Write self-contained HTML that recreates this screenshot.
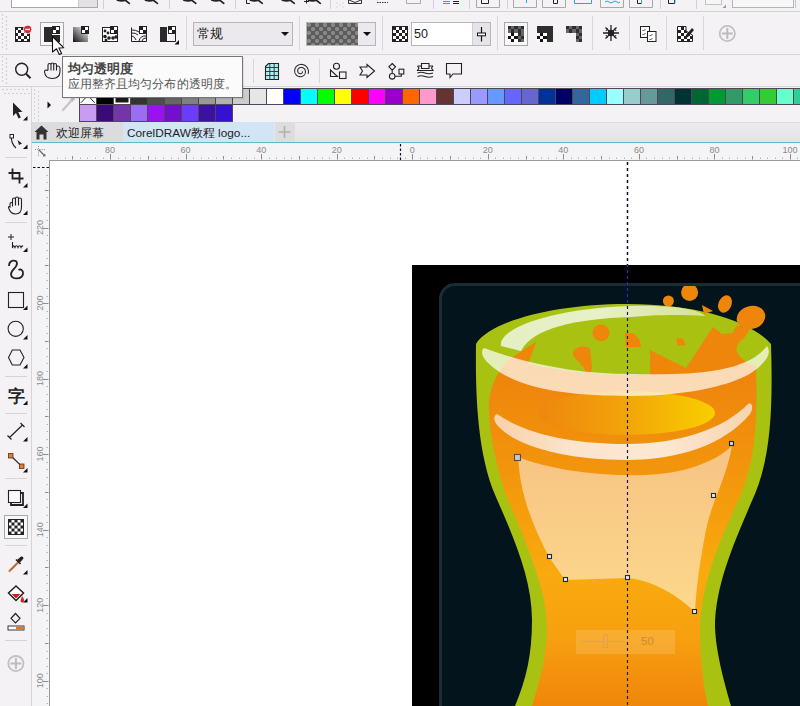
<!DOCTYPE html>
<html><head><meta charset="utf-8">
<style>
*{margin:0;padding:0;box-sizing:border-box}
html,body{width:800px;height:706px;overflow:hidden;background:#f5f2f6;font-family:"Liberation Sans",sans-serif;position:relative}
.a{position:absolute}
.hl{position:absolute;height:1px;background:#d6d4d8}
.vl{position:absolute;width:1px;background:#d6d4d8}
.grip{position:absolute;background-image:radial-gradient(circle at 2.5px 1px,#bcbac0 0.7px,transparent 1.1px),radial-gradient(circle at 6.5px 3px,#bcbac0 0.7px,transparent 1.1px);background-size:8px 4px}
svg{position:absolute;overflow:visible}
.sw{position:absolute;height:17px;border:1px solid #4e4856}
</style></head><body>

<!-- ===== top row (cut off) ===== -->
<div class="a" style="left:11px;top:-2px;width:87px;height:10px;background:#fff;border:1px solid #a9a7ab"></div>
<div class="a" style="left:78px;top:-1px;width:19px;height:8px;background:#e3e1e5;border-left:1px solid #c9c7cb"></div>
<div class="hl" style="left:0;top:11px;width:800px;background:#d3d1d5"></div>

<!-- ===== property bar row ===== -->
<div class="hl" style="left:0;top:54px;width:800px;background:#d6d4d8"></div>

<!-- ===== toolbar row 3 ===== -->
<div class="hl" style="left:0;top:86px;width:800px;background:#d6d4d8"></div>


<!-- ===== toolbar icons ===== -->
<svg class="a" style="left:0;top:0" width="800" height="90" viewBox="0 0 800 90">
<defs>
<pattern id="chk3" x="0" y="0" width="6" height="6" patternUnits="userSpaceOnUse"><rect width="6" height="6" fill="#fff"/><rect width="3" height="3" fill="#222"/><rect x="3" y="3" width="3" height="3" fill="#222"/></pattern>
<pattern id="chkd" x="1" y="1" width="6" height="6" patternUnits="userSpaceOnUse"><rect width="6" height="6" fill="#626262"/><rect width="3" height="3" fill="#262626"/><rect x="3" y="3" width="3" height="3" fill="#262626"/></pattern>
<pattern id="pat" x="307" y="23" width="8" height="8" patternUnits="userSpaceOnUse"><rect width="8" height="8" fill="#5c5c5c"/><circle cx="2" cy="2" r="2.1" fill="#8a8a8a"/><circle cx="6" cy="6" r="2.1" fill="#8a8a8a"/></pattern>
<linearGradient id="gr3" x1="0" y1="1" x2="1" y2="0"><stop offset="0" stop-color="#111"/><stop offset="1" stop-color="#fff"/></linearGradient>
</defs>

<!-- top cut row -->
<g stroke="#d3d1d5" stroke-width="1">
<line x1="103.5" y1="0" x2="103.5" y2="9"/><line x1="169.5" y1="0" x2="169.5" y2="9"/><line x1="235.5" y1="0" x2="235.5" y2="9"/><line x1="330.5" y1="0" x2="330.5" y2="9"/><line x1="433.5" y1="0" x2="433.5" y2="9"/><line x1="469.5" y1="0" x2="469.5" y2="9"/><line x1="507.5" y1="0" x2="507.5" y2="9"/><line x1="660.5" y1="0" x2="660.5" y2="9"/><line x1="696.5" y1="0" x2="696.5" y2="9"/>
</g>
<path d="M117.5,0.3 Q121.5,1.6 125.5,0.3 M125.0,0 L129.3,3.3 M145.6,0.3 Q149.6,1.6 153.6,0.3 M153.1,0 L157.4,3.3 M184,0.3 Q188,1.6 192,0.3 M191.5,0 L195.8,3.3 M212,0.3 Q216,1.6 220,0.3 M219.5,0 L223.8,3.3 M250.5,0.3 Q254.5,1.6 258.5,0.3 M258.0,0 L262.3,3.3 M282.5,0.3 Q286.5,1.6 290.5,0.3 M290.0,0 L294.3,3.3 M308.5,0.3 Q312.5,1.6 316.5,0.3 M316.0,0 L320.3,3.3 " stroke="#222" stroke-width="1.7" fill="none" stroke-linecap="round"/>
<path d="M246.5,0 L246.5,3.5 L250,3.5 M304,1.5 L309,1.5 M306.5,0 L306.5,3.5" stroke="#222" stroke-width="1" fill="none"/>
<g fill="#bbb"><circle cx="337" cy="3" r="0.6"/><circle cx="340" cy="5" r="0.6"/><circle cx="343" cy="3" r="0.6"/><circle cx="337" cy="7" r="0.6"/><circle cx="343" cy="7" r="0.6"/></g>
<path d="M348.5,0 L348.5,3.5 L361.5,3.5 L361.5,0 M349,0 L355,2.5 L361,0" stroke="#333" stroke-width="1" fill="none"/>
<path d="M377,2.5 L388,2.5" stroke="#333" stroke-width="1.2" stroke-dasharray="1.5,1"/>
<path d="M406.5,0 L406.5,3.5 L420.5,3.5 L420.5,0" stroke="#aaa" stroke-width="1" fill="none"/>
<path d="M443,1.5 L450,1.5 M443,3.5 L450,3.5" stroke="#2aa8c0" stroke-width="1.2"/>
<path d="M453,1.5 L459,1.5 M453,3.5 L459,3.5" stroke="#222" stroke-width="1.2"/>
<g stroke="#a8a8a8" stroke-width="1" fill="none">
<path d="M476.5,0 L476.5,7.5 L499.5,7.5 L499.5,0 M513.5,0 L513.5,7.5 L536.5,7.5 L536.5,0 M542.5,0 L542.5,7.5 L565.5,7.5 L565.5,0 M600.5,0 L600.5,7.5 L623.5,7.5 L623.5,0 M629.5,0 L629.5,7.5 L652.5,7.5 L652.5,0"/>
</g>
<path d="M481.5,0 L481.5,3.5 L488.5,3.5 L488.5,0 M553.5,0 L553.5,3.5 L557.5,3.5 L557.5,0 M668.5,0 L668.5,3.5 L674.5,3.5 L674.5,0 M637.5,0 L637.5,3.5 L641.5,3.5" stroke="#222" stroke-width="1" fill="none"/>
<path d="M526.5,0 L526.5,3" stroke="#2aa8c0" stroke-width="1"/>
<path d="M574.5,0 L574.5,3.5 L591.5,3.5 L591.5,0 M605,2 Q607,0 609,2 Q611,4 613,2 Q615,0 617,2 Q619,4 620,2 M641.5,0 L641.5,3 M675,0 L675,3" stroke="#2aa8c0" stroke-width="1" fill="none" stroke-dasharray="none"/>
<rect x="705.5" y="-1" width="16" height="5.5" fill="#f6f6f7" stroke="#c2c2c2"/>
<path d="M726,4.5 L726,8 L722.5,8 Z" fill="#999"/>
<rect x="732.5" y="-1" width="61" height="8.5" fill="#f7f7f8" stroke="#b5b3b7"/><line x1="795.5" y1="0" x2="795.5" y2="8" stroke="#c8c6ca"/>
<!-- property bar -->
<g stroke="#d8d6da" stroke-width="1">
<line x1="186.5" y1="16" x2="186.5" y2="50"/><line x1="299.5" y1="16" x2="299.5" y2="50"/><line x1="382.5" y1="16" x2="382.5" y2="50"/><line x1="497.5" y1="16" x2="497.5" y2="50"/><line x1="592.5" y1="16" x2="592.5" y2="50"/><line x1="629.5" y1="16" x2="629.5" y2="50"/><line x1="666.5" y1="16" x2="666.5" y2="50"/><line x1="703.5" y1="16" x2="703.5" y2="50"/>
</g>
<!-- icon1 -->
<rect x="15.5" y="27.5" width="14" height="14" fill="url(#chk3)" stroke="#222"/>
<circle cx="27.6" cy="29.4" r="4.2" fill="#e0202a" stroke="#fff" stroke-width="0.8"/>
<rect x="25.2" y="28.7" width="4.8" height="1.5" fill="#fff"/>
<!-- icon2 selected -->
<rect x="40.5" y="22.5" width="23" height="23" fill="#f7f6f8" stroke="#a9a7ab"/>
<rect x="44" y="27" width="8" height="15" fill="#2a2a2a"/>
<rect x="52" y="35" width="8" height="7" fill="#2a2a2a"/>
<rect x="52" y="26" width="8" height="8" fill="#222"/><rect x="56" y="27" width="3" height="3" fill="#fff"/><rect x="53" y="30" width="3" height="3" fill="#fff"/>
<!-- icon3 gradient -->
<path d="M73,27 L81,27 L81,34 L88,34 L88,42 L73,42 Z" fill="url(#gr3)"/>
<rect x="81" y="26" width="8" height="8" fill="#222"/><rect x="85" y="27" width="3" height="3" fill="#fff"/><rect x="82" y="30" width="3" height="3" fill="#fff"/>
<!-- icon4 -->
<rect x="102.5" y="27.5" width="15" height="14" fill="#fff" stroke="#222"/>
<g fill="#222"><circle cx="105" cy="31" r="1.4"/><circle cx="108" cy="33" r="1.4"/><circle cx="105" cy="36.5" r="1.8"/><circle cx="109" cy="38" r="1.8"/><circle cx="113" cy="38" r="1.8"/><circle cx="116" cy="37" r="1.8"/><circle cx="106" cy="40" r="1.5"/></g>
<rect x="110" y="26" width="8" height="8" fill="#222"/><rect x="114" y="27" width="3" height="3" fill="#fff"/><rect x="111" y="30" width="3" height="3" fill="#fff"/>
<!-- icon5 arcs -->
<path d="M131.5,27.5 L131.5,41.5 L146.5,41.5 L146.5,34" fill="none" stroke="#222"/>
<g fill="none" stroke="#222" stroke-width="1"><path d="M132,30 A11,11 0 0 1 139,32"/><path d="M132,33 A8,8 0 0 1 138,35"/><path d="M132,36 A6,6 0 0 1 136,40"/><path d="M139,41 A6,6 0 0 1 146,36"/><path d="M142,41 A4,4 0 0 1 146,38"/></g>
<rect x="139" y="26" width="8" height="8" fill="#222"/><rect x="143" y="27" width="3" height="3" fill="#fff"/><rect x="140" y="30" width="3" height="3" fill="#fff"/>
<!-- icon6 -->
<rect x="160" y="27" width="7" height="15" fill="#2a2a2a"/>
<path d="M167,41.5 L175.5,41.5 L175.5,34" fill="none" stroke="#222"/>
<rect x="168" y="26" width="8" height="8" fill="#222"/><rect x="172" y="27" width="3" height="3" fill="#fff"/><rect x="169" y="30" width="3" height="3" fill="#fff"/>
<path d="M179,40 L179,44.5 L174.5,44.5 Z" fill="#111"/>
<!-- dropdown 1 -->
<rect x="193.5" y="22.5" width="99" height="23" fill="#ebe9ed" stroke="#b7b5b9"/>
<path d="M281,32 L289,32 L285,36 Z" fill="#111"/>
<!-- dropdown 2 -->
<rect x="306.5" y="22.5" width="69" height="23" fill="#ebe9ed" stroke="#b7b5b9"/>
<rect x="307" y="23" width="51" height="22" fill="url(#pat)"/>
<path d="M363,32 L371,32 L367,36 Z" fill="#111"/>
<!-- checker icon -->
<rect x="392.5" y="26.5" width="15" height="15" fill="url(#chk3)" stroke="#222"/>
<!-- input -->
<rect x="411.5" y="22.5" width="79" height="23" fill="#fff" stroke="#b7b5b9"/>
<rect x="472" y="23" width="18" height="22" fill="#e6e4e8"/>
<line x1="472.5" y1="23" x2="472.5" y2="45" stroke="#cfcdd1"/>
<line x1="481.5" y1="27" x2="481.5" y2="41.5" stroke="#111" stroke-width="1.2"/>
<rect x="477.5" y="33" width="8" height="2.8" fill="#fff" stroke="#111" stroke-width="1"/>
<!-- selected button 2 -->
<rect x="504.5" y="22.5" width="23" height="23" fill="#f7f6f8" stroke="#a9a7ab"/>
<g shape-rendering="crispEdges"><rect x="508.2" y="26.3" width="15.60" height="15.60" fill="#2e2e2e"/><rect x="511.32" y="26.30" width="3.12" height="3.12" fill="#666"/><rect x="517.56" y="26.30" width="3.12" height="3.12" fill="#666"/><rect x="508.20" y="29.42" width="3.12" height="3.12" fill="#666"/><rect x="514.44" y="29.42" width="3.12" height="3.12" fill="#666"/><rect x="520.68" y="29.42" width="3.12" height="3.12" fill="#666"/><rect x="508.20" y="32.54" width="3.12" height="3.12" fill="#fff"/><rect x="511.32" y="32.54" width="3.12" height="3.12" fill="#111"/><rect x="514.44" y="32.54" width="3.12" height="3.12" fill="#fff"/><rect x="520.68" y="32.54" width="3.12" height="3.12" fill="#666"/><rect x="508.20" y="35.66" width="3.12" height="3.12" fill="#111"/><rect x="511.32" y="35.66" width="3.12" height="3.12" fill="#fff"/><rect x="514.44" y="35.66" width="3.12" height="3.12" fill="#111"/><rect x="517.56" y="35.66" width="3.12" height="3.12" fill="#666"/><rect x="508.20" y="38.78" width="3.12" height="3.12" fill="#fff"/><rect x="511.32" y="38.78" width="3.12" height="3.12" fill="#111"/><rect x="514.44" y="38.78" width="3.12" height="3.12" fill="#fff"/><rect x="520.68" y="38.78" width="3.12" height="3.12" fill="#666"/>
<!-- icon B -->
<rect x="537.2" y="26.3" width="15.60" height="15.60" fill="#2e2e2e"/><rect x="537.20" y="32.54" width="3.12" height="3.12" fill="#fff"/><rect x="540.32" y="32.54" width="3.12" height="3.12" fill="#111"/><rect x="543.44" y="32.54" width="3.12" height="3.12" fill="#fff"/><rect x="537.20" y="35.66" width="3.12" height="3.12" fill="#111"/><rect x="540.32" y="35.66" width="3.12" height="3.12" fill="#fff"/><rect x="543.44" y="35.66" width="3.12" height="3.12" fill="#111"/><rect x="537.20" y="38.78" width="3.12" height="3.12" fill="#fff"/><rect x="540.32" y="38.78" width="3.12" height="3.12" fill="#111"/><rect x="543.44" y="38.78" width="3.12" height="3.12" fill="#fff"/>
<!-- icon C -->
<path d="M566.2,26.3 h15.60 v15.60 h-6.24 v-9.36 h-9.36 Z" fill="#2e2e2e"/><rect x="569.32" y="26.30" width="3.12" height="3.12" fill="#666"/><rect x="575.56" y="26.30" width="3.12" height="3.12" fill="#666"/><rect x="566.20" y="29.42" width="3.12" height="3.12" fill="#666"/><rect x="572.44" y="29.42" width="3.12" height="3.12" fill="#666"/><rect x="578.68" y="29.42" width="3.12" height="3.12" fill="#666"/><rect x="575.56" y="32.54" width="3.12" height="3.12" fill="#666"/><rect x="578.68" y="35.66" width="3.12" height="3.12" fill="#666"/><rect x="575.56" y="38.78" width="3.12" height="3.12" fill="#666"/></g>
<!-- star -->
<g stroke="#222" stroke-width="1.3" fill="none"><path d="M611,25 L611,41 M603,33 L619,33 M605.5,27.5 L616.5,38.5 M616.5,27.5 L605.5,38.5"/></g>
<circle cx="611" cy="33" r="3.2" fill="#222"/>
<g stroke="#222" stroke-width="1" fill="none"><path d="M608,28.5 A4.5,4.5 0 0 0 606,31 M614,28.5 A4.5,4.5 0 0 1 616,31 M608,37.5 A4.5,4.5 0 0 1 606,35 M614,37.5 A4.5,4.5 0 0 0 616,35"/></g>
<!-- pages -->
<rect x="640.5" y="26.5" width="9" height="11" fill="#fff" stroke="#222"/>
<rect x="647.5" y="31.5" width="8.5" height="10" fill="#fff" stroke="#222"/>
<g stroke="#333" stroke-width="0.9" fill="none"><path d="M642.5,30 l1,1 l2,-2 M642.5,34 l1,1 l2,-2 M649.5,35 l1,1 l2,-2 M649.5,39 l1,1 l2,-2"/></g>
<!-- checker pencil -->
<path d="M677.5,26.5 L686,26.5 L686,31 L692.5,35 L692.5,41.5 L677.5,41.5 Z" fill="url(#chk3)" stroke="#222"/>
<path d="M686,35 L692,28 L694,30 L688,37 L685.5,37.5 Z" fill="#222"/>
<!-- plus -->
<circle cx="727.3" cy="33.5" r="7.6" fill="none" stroke="#c2c0c4" stroke-width="1.8"/>
<path d="M727.3,28 L727.3,39 M721.8,33.5 L732.8,33.5" stroke="#bdbbbf" stroke-width="2"/>

<!-- row 3 -->
<circle cx="21.7" cy="69.3" r="6" fill="none" stroke="#222" stroke-width="1.4"/>
<path d="M26,73.8 L30.5,78.3" stroke="#222" stroke-width="2"/>
<path d="M48,70.5 L48,65 Q48,63.5 49.5,63.5 Q51,63.5 51,65 L51,64.5 Q51,63 52.3,63 Q53.7,63 53.7,64.5 L53.7,65 Q53.7,63.5 55.1,63.5 Q56.5,63.5 56.5,65 L56.5,67.5 Q56.5,66 58,66 Q59.8,66 59.9,68 L60,71 Q60,78.5 52.3,78.5 Q45,78.5 44.5,71.8 Q44.5,70 46,70 L48,70.5 M51,65 L51,70.5 M53.7,65 L53.7,70.5 M56.5,66 L56.5,70.5" fill="none" stroke="#222" stroke-width="1.1"/>
<line x1="253.5" y1="59" x2="253.5" y2="83" stroke="#d8d6da"/>
<line x1="319.5" y1="59" x2="319.5" y2="83" stroke="#d8d6da"/>
<!-- grid icon -->
<path d="M265.5,66.5 L268.5,63.5 L278.5,63.5 L278.5,79.5 L265.5,79.5 Z" fill="#a8f0f2" stroke="#222" stroke-width="1.1"/>
<g stroke="#2a2a2a" stroke-width="0.9"><path d="M269.8,63.5 L269.8,79.5 M274.2,63.5 L274.2,79.5 M265.5,67.5 L278.5,67.5 M265.5,71.5 L278.5,71.5 M265.5,75.5 L278.5,75.5"/></g>
<!-- spiral -->
<path d="M302.40,71.36 L302.42,71.46 L302.44,71.57 L302.45,71.68 L302.45,71.80 L302.44,71.91 L302.43,72.03 L302.41,72.15 L302.38,72.27 L302.34,72.38 L302.29,72.50 L302.23,72.61 L302.16,72.73 L302.09,72.83 L302.01,72.94 L301.91,73.04 L301.81,73.13 L301.71,73.22 L301.59,73.31 L301.47,73.38 L301.34,73.45 L301.21,73.51 L301.07,73.57 L300.93,73.61 L300.78,73.64 L300.62,73.67 L300.47,73.68 L300.31,73.69 L300.15,73.68 L299.99,73.66 L299.82,73.63 L299.66,73.59 L299.50,73.54 L299.34,73.48 L299.19,73.41 L299.03,73.32 L298.88,73.23 L298.74,73.12 L298.60,73.00 L298.47,72.87 L298.35,72.74 L298.24,72.59 L298.13,72.43 L298.03,72.27 L297.95,72.10 L297.87,71.92 L297.81,71.73 L297.75,71.54 L297.71,71.35 L297.68,71.15 L297.67,70.94 L297.67,70.74 L297.68,70.53 L297.71,70.32 L297.75,70.11 L297.80,69.91 L297.87,69.70 L297.95,69.50 L298.05,69.30 L298.16,69.11 L298.29,68.92 L298.42,68.74 L298.57,68.57 L298.74,68.41 L298.91,68.26 L299.09,68.11 L299.29,67.98 L299.50,67.86 L299.71,67.76 L299.93,67.66 L300.16,67.58 L300.40,67.52 L300.64,67.47 L300.89,67.44 L301.14,67.42 L301.40,67.42 L301.65,67.44 L301.91,67.47 L302.16,67.52 L302.42,67.59 L302.66,67.67 L302.91,67.77 L303.15,67.89 L303.38,68.02 L303.61,68.17 L303.83,68.34 L304.04,68.52 L304.23,68.72 L304.42,68.93 L304.59,69.15 L304.75,69.38 L304.89,69.63 L305.02,69.89 L305.13,70.15 L305.23,70.43 L305.31,70.71 L305.37,71.00 L305.41,71.29 L305.43,71.59 L305.43,71.89 L305.41,72.20 L305.38,72.50 L305.32,72.80 L305.24,73.10 L305.14,73.40 L305.03,73.69 L304.89,73.97 L304.74,74.25 L304.56,74.51 L304.37,74.77 L304.16,75.02 L303.93,75.25 L303.69,75.47 L303.43,75.67 L303.16,75.86 L302.87,76.03 L302.57,76.18 L302.26,76.32 L301.95,76.43 L301.62,76.53 L301.28,76.60 L300.94,76.65 L300.60,76.68 L300.25,76.68 L299.90,76.67 L299.55,76.63 L299.20,76.57 L298.85,76.48 L298.51,76.37 L298.17,76.24 L297.84,76.09 L297.52,75.92 L297.21,75.72 L296.91,75.50 L296.63,75.26 L296.36,75.01 L296.10,74.73 L295.87,74.44 L295.65,74.13 L295.45,73.81 L295.27,73.47 L295.11,73.12 L294.98,72.75 L294.86,72.38 L294.78,72.00 L294.71,71.61 L294.67,71.22 L294.66,70.82 L294.67,70.43 L294.71,70.03 L294.78,69.63 L294.87,69.24 L294.98,68.85 L295.13,68.46 L295.29,68.09 L295.49,67.72 L295.70,67.37 L295.94,67.03 L296.21,66.70 L296.49,66.39 L296.80,66.10 L297.12,65.83 L297.47,65.58 L297.83,65.35 L298.21,65.14 L298.60,64.96 L299.00,64.80 L299.42,64.67 L299.84,64.56 L300.28,64.48 L300.72,64.43 L301.16,64.41 L301.61,64.42 L302.05,64.45 L302.50,64.52 L302.94,64.61 L303.38,64.73 L303.81,64.88 L304.23,65.06 L304.64,65.27 L305.04,65.51 L305.42,65.77 L305.79,66.05 L306.14,66.36 L306.47,66.70 L306.78,67.06 L307.07,67.43 L307.33,67.83 L307.57,68.25 L307.78,68.68 L307.97,69.12 L308.12,69.58 L308.25,70.05 L308.34,70.53 L308.41,71.02 L308.44,71.51 L308.44,72.00 L308.41,72.50 L308.35,72.99 L308.26,73.48 L308.13,73.97" fill="none" stroke="#333" stroke-width="1.1"/>
<!-- shapes -->
<circle cx="336.5" cy="66.3" r="3" fill="none" stroke="#222" stroke-width="1.1"/>
<path d="M330.5,70 L330.5,76.5 L337.5,76.5 Z" fill="none" stroke="#222" stroke-width="1.1"/>
<rect x="339.5" y="72" width="6.5" height="6.5" fill="none" stroke="#222" stroke-width="1.1"/>
<!-- arrow -->
<path d="M360,67 L367,67 L367,64.5 L374.5,71 L367,77.5 L367,75 L360,75 L362.5,71 Z" fill="none" stroke="#222" stroke-width="1.1" stroke-linejoin="miter"/>
<!-- flowchart -->
<path d="M392.2,63.5 L395.5,66.8 L392.2,70.1 L388.9,66.8 Z M392.2,70.1 L392.2,73.2 M395,76.3 L401.3,76.3 L401.3,74" fill="none" stroke="#222" stroke-width="1.1"/>
<circle cx="392.2" cy="76.3" r="2.8" fill="none" stroke="#222" stroke-width="1.1"/>
<rect x="399" y="69.2" width="4.8" height="4.8" fill="none" stroke="#222" stroke-width="1.1"/>
<!-- banner -->
<path d="M421.5,63.5 L429,63.5 L429,68.5 L421.5,68.5 Z M417.5,66 L421.5,66 M429,66 L433,66 M417.5,66 L419,68 L417.5,70.5 L433,70.5 L431.5,68 L433,66 M417.5,73 Q421,71.5 425,73 Q429,74.5 433,73 M417.5,76.5 Q421,75 425,76.5 Q429,78 433,76.5" fill="none" stroke="#222" stroke-width="1.1"/>
<!-- callout -->
<path d="M446.5,63.5 L461.5,63.5 L461.5,74 L453,74 L450,77.5 L450,74 L446.5,74 Z" fill="none" stroke="#222" stroke-width="1.1"/>
</svg>
<div class="a" style="left:197px;top:26px;font-size:13px;font-weight:500;line-height:16px;color:#222;white-space:nowrap">常规</div>
<div class="a" style="left:414px;top:26px;font-size:12.5px;line-height:16px;color:#222;white-space:nowrap">50</div>

<!-- ===== toolbox ===== -->
<div class="vl" style="left:31px;top:87px;height:619px;background:#d6d4d8"></div>


<!-- ===== toolbox icons ===== -->
<svg class="a" style="left:0;top:0" width="32" height="706" viewBox="0 0 32 706">
<defs><pattern id="chk3b" x="8.5" y="519.5" width="6" height="6" patternUnits="userSpaceOnUse"><rect width="6" height="6" fill="#fff"/><rect width="3" height="3" fill="#222"/><rect x="3" y="3" width="3" height="3" fill="#222"/></pattern></defs>
<g fill="#d6d4d8">
<rect x="5" y="157" width="22" height="1"/><rect x="5" y="222" width="22" height="1"/><rect x="5" y="376" width="22" height="1"/><rect x="5" y="413" width="22" height="1"/><rect x="5" y="478" width="22" height="1"/><rect x="5" y="545" width="22" height="1"/><rect x="5" y="640" width="22" height="1"/>
</g>
<!-- arrow -->
<path d="M13,102.5 L13,116 L16,113 L18.6,118.5 L20.8,117.5 L18.3,112 L22.5,112 Z" fill="#222"/>

<path d="M27.5,116 L27.5,120.5 L23.0,120.5 Z" fill="#111"/>
<!-- shape tool -->
<path d="M11.5,135 Q10.5,143 16,148" fill="none" stroke="#222" stroke-width="1.1"/>
<rect x="10" y="134.5" width="3.5" height="3.5" fill="#fff" stroke="#222" stroke-width="1"/>
<path d="M17.5,140 L22,143.5 L19,145 Z" fill="#222"/>
<path d="M27.5,144.5 L27.5,149.0 L23.0,149.0 Z" fill="#111"/>
<!-- crop -->
<path d="M12.5,168.5 L12.5,178.5 L23.5,178.5 M8.5,173 L19.5,173 L19.5,183.5" fill="none" stroke="#222" stroke-width="1.8"/>
<path d="M27.5,183 L27.5,187.5 L23.0,187.5 Z" fill="#111"/>
<!-- hand -->
<path d="M10,207 L10,204 Q10,202.5 11.3,202.5 Q12.5,202.5 12.5,204 L12.5,199.5 Q12.5,198 14,198 Q15.5,198 15.5,199.5 L15.5,198.5 Q15.5,197 17,197 Q18.5,197 18.5,198.5 L18.5,199.5 Q18.5,198 20,198 Q21.5,198 21.5,199.5 L21.5,207 Q21.5,214 15.5,214 Q11,214 9,209 L8.5,207.5 Q8.5,206 10,207 Z M12.5,204 L12.5,206.5 M15.5,199.5 L15.5,205.5 M18.5,199.5 L18.5,205.5" fill="none" stroke="#222" stroke-width="1.1"/>
<path d="M27.5,210.5 L27.5,215.0 L23.0,215.0 Z" fill="#111"/>
<!-- freehand -->
<path d="M11,234 L11,240 M8,237 L14,237" stroke="#222" stroke-width="1"/>
<path d="M12.5,242 L12.5,248 Q13.5,244 15,247.5 Q16.5,244 18,247.5 Q19.5,244 21,247.5 Q22,245 23,246.5" fill="none" stroke="#222" stroke-width="1.1"/>
<path d="M27.5,247.5 L27.5,252.0 L23.0,252.0 Z" fill="#111"/>
<!-- bezier -->
<path d="M9,266 C9,259.5 17,259 17,263.5 C17,268 10.5,270 11,274.5 C11.5,279.5 22,280 23,274 C23.5,270 20.5,268.5 18.5,270" fill="none" stroke="#222" stroke-width="1.8"/>
<!-- rectangle -->
<rect x="8.5" y="292.5" width="15" height="15" fill="none" stroke="#222" stroke-width="1.1"/>
<path d="M27.5,305.5 L27.5,310.0 L23.0,310.0 Z" fill="#111"/>
<circle cx="15.7" cy="328.8" r="7.6" fill="none" stroke="#222" stroke-width="1.1"/>
<path d="M27.5,335 L27.5,339.5 L23.0,339.5 Z" fill="#111"/>
<path d="M12.3,350 L20,350 L24,357.5 L20,365 L12.3,365 L8.5,357.5 Z" fill="none" stroke="#222" stroke-width="1.1"/>
<path d="M27.5,364 L27.5,368.5 L23.0,368.5 Z" fill="#111"/>
<text x="8" y="401.5" font-size="16.5" font-weight="bold" fill="#222">字</text>
<path d="M27.5,400.5 L27.5,405.0 L23.0,405.0 Z" fill="#111"/>
<path d="M9.5,437.5 L22.5,425 M7.5,435.5 L11.5,439.5 M20.5,423 L24.5,427" fill="none" stroke="#222" stroke-width="1.2"/>
<path d="M27.5,437 L27.5,441.5 L23.0,441.5 Z" fill="#111"/>
<path d="M10.5,455.5 L21.7,466.2" stroke="#333" stroke-width="1.2"/>
<rect x="8.5" y="453.5" width="4.5" height="4.5" fill="#e27c2e" stroke="#5a3418" stroke-width="0.8"/>
<rect x="19.5" y="464" width="4.5" height="4.5" fill="#e27c2e" stroke="#5a3418" stroke-width="0.8"/>
<path d="M27.5,468 L27.5,472.5 L23.0,472.5 Z" fill="#111"/>
<rect x="8.5" y="490.5" width="12" height="12" fill="#fbfbfb" stroke="#222" stroke-width="1.1"/>
<path d="M21,493 L23,493 L23,505 L11,505 L11,503" fill="none" stroke="#222" stroke-width="1.8"/>
<path d="M27.5,503.5 L27.5,508.0 L23.0,508.0 Z" fill="#111"/>
<rect x="4.5" y="515.5" width="23" height="23" fill="#f7f6f8" stroke="#a9a7ab"/>
<rect x="8.5" y="519.5" width="15" height="15" fill="url(#chk3b)" stroke="#222"/>
<!-- eyedropper -->
<path d="M9.5,571 L18,562.5" stroke="#d2763a" stroke-width="2.2" stroke-linecap="round"/>
<path d="M10.5,570 L17,563.5" stroke="#7a4018" stroke-width="0.6"/>
<path d="M17,560 L21,556.5 Q23.5,556 23.5,558.5 L20,562.5 Z" fill="#222"/>
<path d="M16,559.5 L20.5,564" stroke="#222" stroke-width="1.6"/>
<path d="M27.5,570 L27.5,574.5 L23.0,574.5 Z" fill="#111"/>
<!-- fill -->
<path d="M16,586 L23.5,593 L16,600.5 L8.5,593 Z" fill="#fff" stroke="#222" stroke-width="1.5"/>
<path d="M11.5,594 L20.5,594 L16,598.5 Z" fill="#d42020"/>
<path d="M22,596 Q25,599.5 23.5,602 Q21.5,603.5 20.5,601 Z" fill="#d42020"/>
<path d="M27.5,598 L27.5,602.5 L23.0,602.5 Z" fill="#111"/>
<!-- smart fill -->
<path d="M15.5,613.5 L20,618.3 L15.5,623 L11,618.3 Z" fill="#f0f0f0" stroke="#222" stroke-width="1.2"/>
<rect x="8" y="626" width="16" height="4" fill="#fff" stroke="#222" stroke-width="0.9"/>
<rect x="16" y="626.5" width="7.5" height="3" fill="#d67a30"/>
<circle cx="15.9" cy="663.6" r="7.6" fill="none" stroke="#c2c0c4" stroke-width="1.8"/>
<path d="M15.9,658 L15.9,669 M10.4,663.6 L21.4,663.6" stroke="#bdbbbf" stroke-width="2"/>
</svg>
<!-- ===== palette ===== -->
<div id="pal">
<div class="sw" style="left:79.10px;top:88px;width:18px;background:#ffffff"></div>
<div class="sw" style="left:96.10px;top:88px;width:18px;background:#000000"></div>
<div class="sw" style="left:113.10px;top:88px;width:18px;background:#1a1a1a;box-shadow:inset 0 0 0 1.5px #fff"></div>
<div class="sw" style="left:130.10px;top:88px;width:18px;background:#333333"></div>
<div class="sw" style="left:147.10px;top:88px;width:18px;background:#4d4d4d"></div>
<div class="sw" style="left:164.10px;top:88px;width:18px;background:#666666"></div>
<div class="sw" style="left:181.10px;top:88px;width:18px;background:#808080"></div>
<div class="sw" style="left:198.10px;top:88px;width:18px;background:#999999"></div>
<div class="sw" style="left:215.10px;top:88px;width:18px;background:#b3b3b3"></div>
<div class="sw" style="left:232.10px;top:88px;width:18px;background:#cccccc"></div>
<div class="sw" style="left:249.10px;top:88px;width:18px;background:#e6e6e6"></div>
<div class="sw" style="left:266.10px;top:88px;width:18px;background:#ffffff"></div>
<div class="sw" style="left:283.10px;top:88px;width:18px;background:#0000ff"></div>
<div class="sw" style="left:300.10px;top:88px;width:18px;background:#00ffff"></div>
<div class="sw" style="left:317.10px;top:88px;width:18px;background:#00ff00"></div>
<div class="sw" style="left:334.10px;top:88px;width:18px;background:#ffff00"></div>
<div class="sw" style="left:351.10px;top:88px;width:18px;background:#ff0000"></div>
<div class="sw" style="left:368.10px;top:88px;width:18px;background:#ff00ff"></div>
<div class="sw" style="left:385.10px;top:88px;width:18px;background:#9900cc"></div>
<div class="sw" style="left:402.10px;top:88px;width:18px;background:#ff6600"></div>
<div class="sw" style="left:419.10px;top:88px;width:18px;background:#ff99cc"></div>
<div class="sw" style="left:436.10px;top:88px;width:18px;background:#663333"></div>
<div class="sw" style="left:453.10px;top:88px;width:18px;background:#ccccff"></div>
<div class="sw" style="left:470.10px;top:88px;width:18px;background:#9999ff"></div>
<div class="sw" style="left:487.10px;top:88px;width:18px;background:#6699ff"></div>
<div class="sw" style="left:504.10px;top:88px;width:18px;background:#6666ff"></div>
<div class="sw" style="left:521.10px;top:88px;width:18px;background:#6666cc"></div>
<div class="sw" style="left:538.10px;top:88px;width:18px;background:#003399"></div>
<div class="sw" style="left:555.10px;top:88px;width:18px;background:#000066"></div>
<div class="sw" style="left:572.10px;top:88px;width:18px;background:#336699"></div>
<div class="sw" style="left:589.10px;top:88px;width:18px;background:#00ccff"></div>
<div class="sw" style="left:606.10px;top:88px;width:18px;background:#99ffff"></div>
<div class="sw" style="left:623.10px;top:88px;width:18px;background:#99cccc"></div>
<div class="sw" style="left:640.10px;top:88px;width:18px;background:#669999"></div>
<div class="sw" style="left:657.10px;top:88px;width:18px;background:#336666"></div>
<div class="sw" style="left:674.10px;top:88px;width:18px;background:#003333"></div>
<div class="sw" style="left:691.10px;top:88px;width:18px;background:#006633"></div>
<div class="sw" style="left:708.10px;top:88px;width:18px;background:#009933"></div>
<div class="sw" style="left:725.10px;top:88px;width:18px;background:#339966"></div>
<div class="sw" style="left:742.10px;top:88px;width:18px;background:#33cc66"></div>
<div class="sw" style="left:759.10px;top:88px;width:18px;background:#33cc33"></div>
<div class="sw" style="left:776.10px;top:88px;width:18px;background:#66ffcc"></div>
<div class="sw" style="left:793.10px;top:88px;width:18px;background:#33cc99"></div>
<div class="sw" style="left:79.10px;top:104px;width:18px;height:18px;background:#c99cf2"></div>
<div class="sw" style="left:96.10px;top:104px;width:18px;height:18px;background:#3c0a78"></div>
<div class="sw" style="left:113.10px;top:104px;width:18px;height:18px;background:#7236a8"></div>
<div class="sw" style="left:130.10px;top:104px;width:18px;height:18px;background:#9a6ef0"></div>
<div class="sw" style="left:147.10px;top:104px;width:18px;height:18px;background:#9a12ee"></div>
<div class="sw" style="left:164.10px;top:104px;width:18px;height:18px;background:#7410cc"></div>
<div class="sw" style="left:181.10px;top:104px;width:18px;height:18px;background:#6a3ef8"></div>
<div class="sw" style="left:198.10px;top:104px;width:18px;height:18px;background:#3c10a0"></div>
<div class="sw" style="left:215.10px;top:104px;width:18px;height:18px;background:#3412d0"></div>
</div>
<!-- palette extras -->
<svg class="a" style="left:0;top:0" width="45" height="125" viewBox="0 0 45 125"><g fill="#c4c2c6"><circle cx="2.5" cy="15" r="0.75"/><circle cx="6.5" cy="17" r="0.75"/><circle cx="2.5" cy="19" r="0.75"/><circle cx="6.5" cy="21" r="0.75"/><circle cx="2.5" cy="23" r="0.75"/><circle cx="6.5" cy="25" r="0.75"/><circle cx="2.5" cy="27" r="0.75"/><circle cx="6.5" cy="29" r="0.75"/><circle cx="2.5" cy="31" r="0.75"/><circle cx="6.5" cy="33" r="0.75"/><circle cx="2.5" cy="35" r="0.75"/><circle cx="6.5" cy="37" r="0.75"/><circle cx="2.5" cy="39" r="0.75"/><circle cx="6.5" cy="41" r="0.75"/><circle cx="2.5" cy="43" r="0.75"/><circle cx="6.5" cy="45" r="0.75"/><circle cx="2.5" cy="47" r="0.75"/><circle cx="6.5" cy="49" r="0.75"/><circle cx="2.5" cy="57" r="0.75"/><circle cx="6.5" cy="59" r="0.75"/><circle cx="2.5" cy="61" r="0.75"/><circle cx="6.5" cy="63" r="0.75"/><circle cx="2.5" cy="65" r="0.75"/><circle cx="6.5" cy="67" r="0.75"/><circle cx="2.5" cy="69" r="0.75"/><circle cx="6.5" cy="71" r="0.75"/><circle cx="2.5" cy="73" r="0.75"/><circle cx="6.5" cy="75" r="0.75"/><circle cx="2.5" cy="77" r="0.75"/><circle cx="6.5" cy="79" r="0.75"/><circle cx="2.5" cy="81" r="0.75"/><circle cx="6.5" cy="83" r="0.75"/><circle cx="3" cy="89.5" r="0.75"/><circle cx="5" cy="93.5" r="0.75"/><circle cx="7" cy="89.5" r="0.75"/><circle cx="9" cy="93.5" r="0.75"/><circle cx="11" cy="89.5" r="0.75"/><circle cx="13" cy="93.5" r="0.75"/><circle cx="15" cy="89.5" r="0.75"/><circle cx="17" cy="93.5" r="0.75"/><circle cx="19" cy="89.5" r="0.75"/><circle cx="21" cy="93.5" r="0.75"/><circle cx="23" cy="89.5" r="0.75"/><circle cx="25" cy="93.5" r="0.75"/><circle cx="27" cy="89.5" r="0.75"/><circle cx="29" cy="93.5" r="0.75"/><circle cx="34.5" cy="90" r="0.75"/><circle cx="38.5" cy="92" r="0.75"/><circle cx="34.5" cy="94" r="0.75"/><circle cx="38.5" cy="96" r="0.75"/><circle cx="34.5" cy="98" r="0.75"/><circle cx="38.5" cy="100" r="0.75"/><circle cx="34.5" cy="102" r="0.75"/><circle cx="38.5" cy="104" r="0.75"/><circle cx="34.5" cy="106" r="0.75"/><circle cx="38.5" cy="108" r="0.75"/><circle cx="34.5" cy="110" r="0.75"/><circle cx="38.5" cy="112" r="0.75"/><circle cx="34.5" cy="114" r="0.75"/><circle cx="38.5" cy="116" r="0.75"/><circle cx="34.5" cy="118" r="0.75"/><circle cx="38.5" cy="120" r="0.75"/></g></svg>

<svg class="a" style="left:0;top:0" width="90" height="125" viewBox="0 0 90 125">
<path d="M47.5,101.5 L51,105 L47.5,108.5 Z" fill="#111"/>
<path d="M63,110 L71,101" stroke="#c8c6ca" stroke-width="2.4" stroke-linecap="round"/>
<path d="M70,99.5 L73,97 L75,99 L72.5,102 Z" fill="#bdbbbf"/>
<path d="M87.8,95.3 L80.9,102.8 M87.8,95.3 L94.7,102.8" stroke="#333" stroke-width="1"/>
</svg>
<!-- ===== tabs ===== -->
<div class="a" style="left:32px;top:122px;width:768px;height:20px;background:linear-gradient(#eceaee,#e5e3e7);border-top:1px solid #dddbdf"></div>
<div class="a" style="left:32px;top:122px;width:91px;height:20px;background:#dcdbdf"></div>
<div class="a" style="left:123px;top:122px;width:151px;height:20px;background:#d2e5f6"></div>
<div class="a" style="left:275px;top:122px;width:20px;height:20px;background:#dddcdf"></div>
<div class="a" style="left:32px;top:142px;width:768px;height:1px;background:#5fb9c9"></div>
<!-- tab content -->
<svg class="a" style="left:0;top:0" width="100" height="150" viewBox="0 0 100 150"><path fill="#333" d="M34.5,132 L41.5,125.5 L48.5,132 L46.5,132 L46.5,139.5 L43.5,139.5 L43.5,134.5 L39.5,134.5 L39.5,139.5 L36.5,139.5 L36.5,132 Z"/></svg>
<div class="a" style="left:55.5px;top:125px;font-size:12px;font-weight:500;line-height:16px;color:#222;white-space:nowrap">欢迎屏幕</div>
<div class="a" style="left:127px;top:125px;font-size:11.8px;line-height:16px;color:#222;white-space:nowrap">CorelDRAW教程 logo...</div>
<svg class="a" style="left:0;top:0" width="300" height="150" viewBox="0 0 300 150"><path stroke="#b0b0b0" stroke-width="1.6" d="M284.5,126 L284.5,138 M278.5,132 L290.5,132"/></svg>


<!-- ===== rulers ===== -->
<div class="a" style="left:32px;top:143px;width:768px;height:17px;background:#f4f3f6"></div>
<div class="a" style="left:32px;top:143px;width:17px;height:563px;background:#f4f3f6"></div>
<div class="a" style="left:49px;top:160px;width:751px;height:546px;background:#fff"></div>
<div class="a" style="left:49px;top:160px;width:751px;height:1px;background:#9a9a9a"></div>
<div class="a" style="left:49px;top:160px;width:1px;height:546px;background:#9a9a9a"></div>

<!-- ===== ruler ticks ===== -->
<svg class="a" style="left:0;top:0" width="800" height="706" viewBox="0 0 800 706">
<g stroke="#8c8c8c" stroke-width="1" fill="none">
<line x1="57.5" y1="157.5" x2="57.5" y2="159" stroke="#b4b4b4"/>
<line x1="65.5" y1="157.5" x2="65.5" y2="159" stroke="#b4b4b4"/>
<line x1="72.5" y1="156" x2="72.5" y2="159.5"/>
<line x1="80.5" y1="157.5" x2="80.5" y2="159" stroke="#b4b4b4"/>
<line x1="87.5" y1="157.5" x2="87.5" y2="159" stroke="#b4b4b4"/>
<line x1="95.5" y1="157.5" x2="95.5" y2="159" stroke="#b4b4b4"/>
<line x1="103.5" y1="157.5" x2="103.5" y2="159" stroke="#b4b4b4"/>
<line x1="110.5" y1="154" x2="110.5" y2="159.5"/>
<line x1="118.5" y1="157.5" x2="118.5" y2="159" stroke="#b4b4b4"/>
<line x1="125.5" y1="157.5" x2="125.5" y2="159" stroke="#b4b4b4"/>
<line x1="133.5" y1="157.5" x2="133.5" y2="159" stroke="#b4b4b4"/>
<line x1="140.5" y1="157.5" x2="140.5" y2="159" stroke="#b4b4b4"/>
<line x1="148.5" y1="156" x2="148.5" y2="159.5"/>
<line x1="155.5" y1="157.5" x2="155.5" y2="159" stroke="#b4b4b4"/>
<line x1="163.5" y1="157.5" x2="163.5" y2="159" stroke="#b4b4b4"/>
<line x1="171.5" y1="157.5" x2="171.5" y2="159" stroke="#b4b4b4"/>
<line x1="178.5" y1="157.5" x2="178.5" y2="159" stroke="#b4b4b4"/>
<line x1="186.5" y1="154" x2="186.5" y2="159.5"/>
<line x1="193.5" y1="157.5" x2="193.5" y2="159" stroke="#b4b4b4"/>
<line x1="201.5" y1="157.5" x2="201.5" y2="159" stroke="#b4b4b4"/>
<line x1="208.5" y1="157.5" x2="208.5" y2="159" stroke="#b4b4b4"/>
<line x1="216.5" y1="157.5" x2="216.5" y2="159" stroke="#b4b4b4"/>
<line x1="223.5" y1="156" x2="223.5" y2="159.5"/>
<line x1="231.5" y1="157.5" x2="231.5" y2="159" stroke="#b4b4b4"/>
<line x1="239.5" y1="157.5" x2="239.5" y2="159" stroke="#b4b4b4"/>
<line x1="246.5" y1="157.5" x2="246.5" y2="159" stroke="#b4b4b4"/>
<line x1="254.5" y1="157.5" x2="254.5" y2="159" stroke="#b4b4b4"/>
<line x1="261.5" y1="154" x2="261.5" y2="159.5"/>
<line x1="269.5" y1="157.5" x2="269.5" y2="159" stroke="#b4b4b4"/>
<line x1="276.5" y1="157.5" x2="276.5" y2="159" stroke="#b4b4b4"/>
<line x1="284.5" y1="157.5" x2="284.5" y2="159" stroke="#b4b4b4"/>
<line x1="291.5" y1="157.5" x2="291.5" y2="159" stroke="#b4b4b4"/>
<line x1="299.5" y1="156" x2="299.5" y2="159.5"/>
<line x1="307.5" y1="157.5" x2="307.5" y2="159" stroke="#b4b4b4"/>
<line x1="314.5" y1="157.5" x2="314.5" y2="159" stroke="#b4b4b4"/>
<line x1="322.5" y1="157.5" x2="322.5" y2="159" stroke="#b4b4b4"/>
<line x1="329.5" y1="157.5" x2="329.5" y2="159" stroke="#b4b4b4"/>
<line x1="337.5" y1="154" x2="337.5" y2="159.5"/>
<line x1="344.5" y1="157.5" x2="344.5" y2="159" stroke="#b4b4b4"/>
<line x1="352.5" y1="157.5" x2="352.5" y2="159" stroke="#b4b4b4"/>
<line x1="359.5" y1="157.5" x2="359.5" y2="159" stroke="#b4b4b4"/>
<line x1="367.5" y1="157.5" x2="367.5" y2="159" stroke="#b4b4b4"/>
<line x1="374.5" y1="156" x2="374.5" y2="159.5"/>
<line x1="382.5" y1="157.5" x2="382.5" y2="159" stroke="#b4b4b4"/>
<line x1="390.5" y1="157.5" x2="390.5" y2="159" stroke="#b4b4b4"/>
<line x1="397.5" y1="157.5" x2="397.5" y2="159" stroke="#b4b4b4"/>
<line x1="405.5" y1="157.5" x2="405.5" y2="159" stroke="#b4b4b4"/>
<line x1="412.5" y1="154" x2="412.5" y2="159.5"/>
<line x1="420.5" y1="157.5" x2="420.5" y2="159" stroke="#b4b4b4"/>
<line x1="427.5" y1="157.5" x2="427.5" y2="159" stroke="#b4b4b4"/>
<line x1="435.5" y1="157.5" x2="435.5" y2="159" stroke="#b4b4b4"/>
<line x1="442.5" y1="157.5" x2="442.5" y2="159" stroke="#b4b4b4"/>
<line x1="450.5" y1="156" x2="450.5" y2="159.5"/>
<line x1="458.5" y1="157.5" x2="458.5" y2="159" stroke="#b4b4b4"/>
<line x1="465.5" y1="157.5" x2="465.5" y2="159" stroke="#b4b4b4"/>
<line x1="473.5" y1="157.5" x2="473.5" y2="159" stroke="#b4b4b4"/>
<line x1="480.5" y1="157.5" x2="480.5" y2="159" stroke="#b4b4b4"/>
<line x1="488.5" y1="154" x2="488.5" y2="159.5"/>
<line x1="495.5" y1="157.5" x2="495.5" y2="159" stroke="#b4b4b4"/>
<line x1="503.5" y1="157.5" x2="503.5" y2="159" stroke="#b4b4b4"/>
<line x1="510.5" y1="157.5" x2="510.5" y2="159" stroke="#b4b4b4"/>
<line x1="518.5" y1="157.5" x2="518.5" y2="159" stroke="#b4b4b4"/>
<line x1="526.5" y1="156" x2="526.5" y2="159.5"/>
<line x1="533.5" y1="157.5" x2="533.5" y2="159" stroke="#b4b4b4"/>
<line x1="541.5" y1="157.5" x2="541.5" y2="159" stroke="#b4b4b4"/>
<line x1="548.5" y1="157.5" x2="548.5" y2="159" stroke="#b4b4b4"/>
<line x1="556.5" y1="157.5" x2="556.5" y2="159" stroke="#b4b4b4"/>
<line x1="563.5" y1="154" x2="563.5" y2="159.5"/>
<line x1="571.5" y1="157.5" x2="571.5" y2="159" stroke="#b4b4b4"/>
<line x1="578.5" y1="157.5" x2="578.5" y2="159" stroke="#b4b4b4"/>
<line x1="586.5" y1="157.5" x2="586.5" y2="159" stroke="#b4b4b4"/>
<line x1="594.5" y1="157.5" x2="594.5" y2="159" stroke="#b4b4b4"/>
<line x1="601.5" y1="156" x2="601.5" y2="159.5"/>
<line x1="609.5" y1="157.5" x2="609.5" y2="159" stroke="#b4b4b4"/>
<line x1="616.5" y1="157.5" x2="616.5" y2="159" stroke="#b4b4b4"/>
<line x1="624.5" y1="157.5" x2="624.5" y2="159" stroke="#b4b4b4"/>
<line x1="631.5" y1="157.5" x2="631.5" y2="159" stroke="#b4b4b4"/>
<line x1="639.5" y1="154" x2="639.5" y2="159.5"/>
<line x1="646.5" y1="157.5" x2="646.5" y2="159" stroke="#b4b4b4"/>
<line x1="654.5" y1="157.5" x2="654.5" y2="159" stroke="#b4b4b4"/>
<line x1="662.5" y1="157.5" x2="662.5" y2="159" stroke="#b4b4b4"/>
<line x1="669.5" y1="157.5" x2="669.5" y2="159" stroke="#b4b4b4"/>
<line x1="677.5" y1="156" x2="677.5" y2="159.5"/>
<line x1="684.5" y1="157.5" x2="684.5" y2="159" stroke="#b4b4b4"/>
<line x1="692.5" y1="157.5" x2="692.5" y2="159" stroke="#b4b4b4"/>
<line x1="699.5" y1="157.5" x2="699.5" y2="159" stroke="#b4b4b4"/>
<line x1="707.5" y1="157.5" x2="707.5" y2="159" stroke="#b4b4b4"/>
<line x1="714.5" y1="154" x2="714.5" y2="159.5"/>
<line x1="722.5" y1="157.5" x2="722.5" y2="159" stroke="#b4b4b4"/>
<line x1="729.5" y1="157.5" x2="729.5" y2="159" stroke="#b4b4b4"/>
<line x1="737.5" y1="157.5" x2="737.5" y2="159" stroke="#b4b4b4"/>
<line x1="745.5" y1="157.5" x2="745.5" y2="159" stroke="#b4b4b4"/>
<line x1="752.5" y1="156" x2="752.5" y2="159.5"/>
<line x1="760.5" y1="157.5" x2="760.5" y2="159" stroke="#b4b4b4"/>
<line x1="767.5" y1="157.5" x2="767.5" y2="159" stroke="#b4b4b4"/>
<line x1="775.5" y1="157.5" x2="775.5" y2="159" stroke="#b4b4b4"/>
<line x1="782.5" y1="157.5" x2="782.5" y2="159" stroke="#b4b4b4"/>
<line x1="790.5" y1="154" x2="790.5" y2="159.5"/>
<line x1="797.5" y1="157.5" x2="797.5" y2="159" stroke="#b4b4b4"/>
<line x1="46.5" y1="703.5" x2="48" y2="703.5" stroke="#b4b4b4"/>
<line x1="46.5" y1="696.5" x2="48" y2="696.5" stroke="#b4b4b4"/>
<line x1="46.5" y1="688.5" x2="48" y2="688.5" stroke="#b4b4b4"/>
<line x1="43" y1="681.5" x2="48.5" y2="681.5"/>
<line x1="46.5" y1="673.5" x2="48" y2="673.5" stroke="#b4b4b4"/>
<line x1="46.5" y1="666.5" x2="48" y2="666.5" stroke="#b4b4b4"/>
<line x1="46.5" y1="658.5" x2="48" y2="658.5" stroke="#b4b4b4"/>
<line x1="46.5" y1="651.5" x2="48" y2="651.5" stroke="#b4b4b4"/>
<line x1="45" y1="643.5" x2="48.5" y2="643.5"/>
<line x1="46.5" y1="635.5" x2="48" y2="635.5" stroke="#b4b4b4"/>
<line x1="46.5" y1="628.5" x2="48" y2="628.5" stroke="#b4b4b4"/>
<line x1="46.5" y1="620.5" x2="48" y2="620.5" stroke="#b4b4b4"/>
<line x1="46.5" y1="613.5" x2="48" y2="613.5" stroke="#b4b4b4"/>
<line x1="43" y1="605.5" x2="48.5" y2="605.5"/>
<line x1="46.5" y1="598.5" x2="48" y2="598.5" stroke="#b4b4b4"/>
<line x1="46.5" y1="590.5" x2="48" y2="590.5" stroke="#b4b4b4"/>
<line x1="46.5" y1="583.5" x2="48" y2="583.5" stroke="#b4b4b4"/>
<line x1="46.5" y1="575.5" x2="48" y2="575.5" stroke="#b4b4b4"/>
<line x1="45" y1="567.5" x2="48.5" y2="567.5"/>
<line x1="46.5" y1="560.5" x2="48" y2="560.5" stroke="#b4b4b4"/>
<line x1="46.5" y1="552.5" x2="48" y2="552.5" stroke="#b4b4b4"/>
<line x1="46.5" y1="545.5" x2="48" y2="545.5" stroke="#b4b4b4"/>
<line x1="46.5" y1="537.5" x2="48" y2="537.5" stroke="#b4b4b4"/>
<line x1="43" y1="530.5" x2="48.5" y2="530.5"/>
<line x1="46.5" y1="522.5" x2="48" y2="522.5" stroke="#b4b4b4"/>
<line x1="46.5" y1="515.5" x2="48" y2="515.5" stroke="#b4b4b4"/>
<line x1="46.5" y1="507.5" x2="48" y2="507.5" stroke="#b4b4b4"/>
<line x1="46.5" y1="499.5" x2="48" y2="499.5" stroke="#b4b4b4"/>
<line x1="45" y1="492.5" x2="48.5" y2="492.5"/>
<line x1="46.5" y1="484.5" x2="48" y2="484.5" stroke="#b4b4b4"/>
<line x1="46.5" y1="477.5" x2="48" y2="477.5" stroke="#b4b4b4"/>
<line x1="46.5" y1="469.5" x2="48" y2="469.5" stroke="#b4b4b4"/>
<line x1="46.5" y1="462.5" x2="48" y2="462.5" stroke="#b4b4b4"/>
<line x1="43" y1="454.5" x2="48.5" y2="454.5"/>
<line x1="46.5" y1="447.5" x2="48" y2="447.5" stroke="#b4b4b4"/>
<line x1="46.5" y1="439.5" x2="48" y2="439.5" stroke="#b4b4b4"/>
<line x1="46.5" y1="431.5" x2="48" y2="431.5" stroke="#b4b4b4"/>
<line x1="46.5" y1="424.5" x2="48" y2="424.5" stroke="#b4b4b4"/>
<line x1="45" y1="416.5" x2="48.5" y2="416.5"/>
<line x1="46.5" y1="409.5" x2="48" y2="409.5" stroke="#b4b4b4"/>
<line x1="46.5" y1="401.5" x2="48" y2="401.5" stroke="#b4b4b4"/>
<line x1="46.5" y1="394.5" x2="48" y2="394.5" stroke="#b4b4b4"/>
<line x1="46.5" y1="386.5" x2="48" y2="386.5" stroke="#b4b4b4"/>
<line x1="43" y1="379.5" x2="48.5" y2="379.5"/>
<line x1="46.5" y1="371.5" x2="48" y2="371.5" stroke="#b4b4b4"/>
<line x1="46.5" y1="363.5" x2="48" y2="363.5" stroke="#b4b4b4"/>
<line x1="46.5" y1="356.5" x2="48" y2="356.5" stroke="#b4b4b4"/>
<line x1="46.5" y1="348.5" x2="48" y2="348.5" stroke="#b4b4b4"/>
<line x1="45" y1="341.5" x2="48.5" y2="341.5"/>
<line x1="46.5" y1="333.5" x2="48" y2="333.5" stroke="#b4b4b4"/>
<line x1="46.5" y1="326.5" x2="48" y2="326.5" stroke="#b4b4b4"/>
<line x1="46.5" y1="318.5" x2="48" y2="318.5" stroke="#b4b4b4"/>
<line x1="46.5" y1="311.5" x2="48" y2="311.5" stroke="#b4b4b4"/>
<line x1="43" y1="303.5" x2="48.5" y2="303.5"/>
<line x1="46.5" y1="296.5" x2="48" y2="296.5" stroke="#b4b4b4"/>
<line x1="46.5" y1="288.5" x2="48" y2="288.5" stroke="#b4b4b4"/>
<line x1="46.5" y1="280.5" x2="48" y2="280.5" stroke="#b4b4b4"/>
<line x1="46.5" y1="273.5" x2="48" y2="273.5" stroke="#b4b4b4"/>
<line x1="45" y1="265.5" x2="48.5" y2="265.5"/>
<line x1="46.5" y1="258.5" x2="48" y2="258.5" stroke="#b4b4b4"/>
<line x1="46.5" y1="250.5" x2="48" y2="250.5" stroke="#b4b4b4"/>
<line x1="46.5" y1="243.5" x2="48" y2="243.5" stroke="#b4b4b4"/>
<line x1="46.5" y1="235.5" x2="48" y2="235.5" stroke="#b4b4b4"/>
<line x1="43" y1="228.5" x2="48.5" y2="228.5"/>
<line x1="46.5" y1="220.5" x2="48" y2="220.5" stroke="#b4b4b4"/>
<line x1="46.5" y1="212.5" x2="48" y2="212.5" stroke="#b4b4b4"/>
<line x1="46.5" y1="205.5" x2="48" y2="205.5" stroke="#b4b4b4"/>
<line x1="46.5" y1="197.5" x2="48" y2="197.5" stroke="#b4b4b4"/>
<line x1="45" y1="190.5" x2="48.5" y2="190.5"/>
<line x1="46.5" y1="182.5" x2="48" y2="182.5" stroke="#b4b4b4"/>
<line x1="46.5" y1="175.5" x2="48" y2="175.5" stroke="#b4b4b4"/>
</g>
<g font-family="Liberation Sans" font-size="9" fill="#8a8a8a" text-anchor="middle">
<text x="110.1" y="153">80</text>
<text x="185.6" y="153">60</text>
<text x="261.2" y="153">40</text>
<text x="336.7" y="153">20</text>
<text x="412.2" y="153">0</text>
<text x="487.8" y="153">20</text>
<text x="563.3" y="153">40</text>
<text x="638.9" y="153">60</text>
<text x="714.4" y="153">80</text>
<text x="789.9" y="153">100</text>
<text x="0" y="0" transform="translate(42.5 680.7) rotate(-90)">100</text>
<text x="0" y="0" transform="translate(42.5 605.2) rotate(-90)">120</text>
<text x="0" y="0" transform="translate(42.5 529.7) rotate(-90)">140</text>
<text x="0" y="0" transform="translate(42.5 454.1) rotate(-90)">160</text>
<text x="0" y="0" transform="translate(42.5 378.6) rotate(-90)">180</text>
<text x="0" y="0" transform="translate(42.5 303.1) rotate(-90)">200</text>
<text x="0" y="0" transform="translate(42.5 227.5) rotate(-90)">220</text>
</g>
<line x1="400.5" y1="144" x2="400.5" y2="160" stroke="#111" stroke-width="1.2" stroke-dasharray="2.5,2"/>
<line x1="33" y1="167.5" x2="49" y2="167.5" stroke="#111" stroke-width="1.2" stroke-dasharray="2.5,2"/>
<g stroke="#8a8a8a" stroke-width="1" fill="none"><path d="M35,149.5 L46,149.5 M38.5,146 L38.5,157" stroke-dasharray="1,1.2"/><path d="M39,150 L44.5,155.5" stroke="#666" stroke-width="1.2"/><rect x="43" y="154" width="2.5" height="2.5" fill="#777" stroke="none"/></g>
</svg>
<!-- ===== image ===== -->
<div class="a" style="left:412px;top:265px;width:388px;height:441px;background:#000"></div>
<div class="a" style="left:439px;top:283px;width:400px;height:460px;background:#03141c;border:3px solid #1a2c35;border-radius:16px"></div>


<!-- ===== glass ===== -->
<svg class="a" style="left:0;top:0" width="800" height="706" viewBox="0 0 800 706">
<defs>
<clipPath id="imgclip"><rect x="442" y="286" width="400" height="460"/></clipPath>
<linearGradient id="bodyg" x1="0" y1="360" x2="0" y2="706" gradientUnits="userSpaceOnUse">
<stop offset="0" stop-color="#ee820c"/><stop offset="0.3" stop-color="#f2940c"/><stop offset="0.62" stop-color="#f9aa0e"/><stop offset="0.8" stop-color="#f7a010"/><stop offset="1" stop-color="#f0860a"/>
</linearGradient>
<linearGradient id="yelg" x1="537" y1="0" x2="715" y2="0" gradientUnits="userSpaceOnUse">
<stop offset="0" stop-color="#ee860e"/><stop offset="0.5" stop-color="#f3a40a"/><stop offset="0.85" stop-color="#f7c202"/><stop offset="1" stop-color="#f9ce00"/>
</linearGradient>
<linearGradient id="creamg" x1="0" y1="470" x2="0" y2="610" gradientUnits="userSpaceOnUse">
<stop offset="0" stop-color="#f8c684"/><stop offset="1" stop-color="#fcd88c"/>
</linearGradient>
<linearGradient id="band2g" x1="495" y1="0" x2="752" y2="0" gradientUnits="userSpaceOnUse"><stop offset="0" stop-color="#f9d2a8"/><stop offset="0.3" stop-color="#fbe4cc"/><stop offset="0.65" stop-color="#fce8d2"/><stop offset="1" stop-color="#f8d4b0"/></linearGradient>
<linearGradient id="cresg" x1="500" y1="0" x2="705" y2="0" gradientUnits="userSpaceOnUse"><stop offset="0" stop-color="#e6eec4"/><stop offset="0.5" stop-color="#e8f0c6"/><stop offset="1" stop-color="#d6e290"/></linearGradient>
</defs>
<g clip-path="url(#imgclip)">
<path fill="#a9c212" d="M476,344 C489,322 552,304 627,304 C700,304 752,322 771,344 C773,410 771,462 751,503 C735,541 715,585 715,627 C716,655 726,688 731,706 L515,706 C526,680 532,655 532,620 C532,575 510,530 493,490 C480,455 475,410 476,344 Z"/>
<path fill="url(#bodyg)" d="M489,400 C491,385 498,370 510,359 L536,342 L528,364 C565,372 600,375 630,375 C680,375 720,370 745,362 L756,366 C758,425 755,465 737,503 C720,541 702,580 700,627 C700,660 704,690 708,706 L532,706 C540,680 547,655 547,627 C547,590 525,540 508,500 C494,462 488,425 489,400 Z"/>
<!-- interior orange splashes -->
<g fill="#ef860c">
<path d="M510,359 L536,342 L528,362 L527,374 L505,374 Z"/>
<path d="M650,376 L650,350 L686,368 L713,327 L722,334 L734,333 L740,342 L736,350 L742,358 L750,366 L740,382 L650,382 Z"/>
<ellipse cx="751" cy="317.5" rx="14.5" ry="11.5" transform="rotate(-15 751 317.5)"/>
<path d="M736,326 L752,326 L740,344 L730,338 Z"/>
<path d="M625,333 L633,333 Q641,339 641,347 L626,347 Z"/>
<path d="M676,339 Q680,337 683,339 L686,345 L678,346 Z"/>
<circle cx="601" cy="333" r="8.5"/>
<path d="M573,352 C576,346 586,345 590,349 L592,366 L590,384 L584,368 C578,360 572,357 573,352 Z"/>
<circle cx="689.6" cy="292.4" r="8.5"/>
<circle cx="668.4" cy="301" r="5.5"/>
<ellipse cx="725" cy="304" rx="6.5" ry="9" transform="rotate(25 725 304)"/>
<path d="M702,305 L713,311 L704,314 Z"/>
</g>
<circle cx="748" cy="349" r="11" fill="#a9c212"/>
<!-- crescent -->
<path fill="url(#cresg)" d="M501,346 C498,330 545,309 630,306 C670,305 700,309 705,316 C680,314 650,315 630,317 C575,319 533,328 521,351 Z"/>
<!-- yellow ellipse -->
<ellipse cx="627" cy="413" rx="88" ry="22" fill="url(#yelg)"/>
<!-- upper pale band -->
<path fill="#fff" fill-opacity="0.7" d="M484,348 C530,365 580,374 630,374 C690,375 745,374 767,346 C771,352 768,358 762,364 C745,384 690,396 630,396 C570,396 515,390 487,362 C481,356 481,350 484,348 Z"/>
<!-- second pale band -->
<path fill="url(#band2g)" d="M497,414 C530,437 580,444 627,444 C680,444 725,428 748,404 C752,402 754,408 750,414 C725,444 680,460 627,460 C570,460 520,448 500,428 C493,422 493,416 497,414 Z"/>
<!-- cream -->
<path fill="url(#creamg)" d="M518,457 C545,468 590,475 627,475 C680,477 715,462 732,446 C726,480 712,500 706,530 C700,560 696,590 695,612 C680,598 655,580 627,578 L565,580 L549,557 C535,530 522,500 519,468 Z"/>
<!-- slider overlay -->
<rect x="576" y="630" width="99" height="24" fill="#fff" fill-opacity="0.14"/>
<rect x="656" y="630" width="19" height="24" fill="#fff" fill-opacity="0.0"/>
<g stroke="#e0a050" stroke-width="1" fill="none" opacity="0.9">
<line x1="582" y1="641.5" x2="625" y2="641.5"/>
<rect x="603.5" y="634.5" width="4" height="13" fill="#f2ac3c"/>
</g>
<text x="641" y="645" font-family="Liberation Sans" font-size="11.5" fill="#cf8a2a">50</text>
</g>
<!-- dashed guide -->
<line x1="627.5" y1="162" x2="627.5" y2="706" stroke="#1c1c60" stroke-width="1.2" stroke-dasharray="3,3"/>
<line x1="627.5" y1="162" x2="627.5" y2="304" stroke="#2c2cb0" stroke-width="1.2" stroke-dasharray="3,3"/>
<line x1="627.5" y1="162" x2="627.5" y2="265" stroke="#111" stroke-width="1.2" stroke-dasharray="3,3"/>
<!-- nodes -->
<g fill="#e4ecf2" stroke="#1e2a38" stroke-width="1.1">
<rect x="514.5" y="454.5" width="6" height="6" fill="#c8c8c8" stroke="#505050"/>
<rect x="729.5" y="441.5" width="4" height="4" fill="#c9d8e0"/>
<rect x="711.5" y="493.5" width="4" height="4"/>
<rect x="547.5" y="554.5" width="4" height="4"/>
<rect x="563.5" y="577.5" width="4" height="4"/>
<rect x="625.5" y="575.5" width="4" height="4"/>
<rect x="692.5" y="609.5" width="4" height="4"/>
</g>
</svg>


<!-- ===== tooltip ===== -->
<div class="a" style="left:62px;top:56px;width:181px;height:42px;background:#fbfbfb;border:1px solid #767676;box-shadow:1px 1px 1px rgba(0,0,0,0.08)"></div>
<div class="a" style="left:68px;top:60px;font-size:13.3px;line-height:17px;font-weight:bold;color:#444;white-space:nowrap">均匀透明度</div>
<div class="a" style="left:67.5px;top:76px;letter-spacing:0.12px;font-size:12px;line-height:17px;color:#555;white-space:nowrap">应用整齐且均匀分布的透明度。</div>

<!-- cursor -->
<svg class="a" style="left:0;top:0" width="80" height="70" viewBox="0 0 80 70">
<path d="M52.5,36.5 L52.5,52 L56.5,48.8 L59.3,54.5 L61.6,53.4 L58.9,48 L63.8,47.8 Z" fill="#fff" stroke="#111" stroke-width="1.1" stroke-linejoin="round"/>
</svg>
</body></html>
